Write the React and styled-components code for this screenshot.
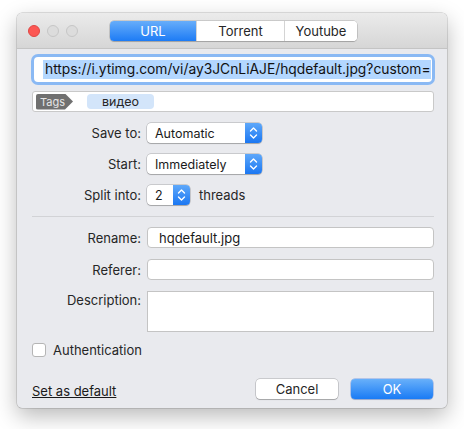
import React from "react";
import styled, { createGlobalStyle } from "styled-components";

const Global = createGlobalStyle`
  html, body { margin: 0; padding: 0; background: #ffffff; }
  body { font-family: Inter, "Liberation Sans", sans-serif; color: #262626; }
  * { box-sizing: border-box; }
`;

const Page = styled.div`
  width: 464px;
  height: 429px;
  padding: 13px 0 0 17px;
`;

const Window = styled.div`
  width: 430px;
  height: 395px;
  background: #e9eaee;
  border-radius: 5px;
  box-shadow: 0 0 0 0.5px rgba(0,0,0,0.22), 0 8px 22px rgba(0,0,0,0.28);
  display: flex;
  flex-direction: column;
  overflow: hidden;
`;

const TitleBar = styled.div`
  height: 36px;
  flex: none;
  background: linear-gradient(#ebebeb, #d6d6d6);
  border-bottom: 1px solid #c4c4c4;
  display: flex;
  align-items: center;
  padding-left: 11px;
`;

const Lights = styled.div`
  display: flex;
  gap: 7px;
`;

const Light = styled.span`
  width: 12px;
  height: 12px;
  border-radius: 50%;
  background: ${p => (p.$red ? "#fc5753" : "#dcdcdc")};
  border: 1px solid ${p => (p.$red ? "#df4744" : "#c6c6c6")};
`;

const Segmented = styled.div`
  display: flex;
  margin-left: 32px;
  height: 20px;
  border-radius: 4px;
  background: #fff;
  box-shadow: 0 0 0 0.5px rgba(0,0,0,0.25), 0 1px 1px rgba(0,0,0,0.15);
  overflow: hidden;
`;

const Segment = styled.div`
  width: ${p => p.$w}px;
  display: flex;
  align-items: center;
  justify-content: center;
  font-size: 13px;
  color: ${p => (p.$active ? "#fff" : "#262626")};
  background: ${p => (p.$active ? "linear-gradient(#67adfa, #1d7bf5)" : "#fff")};
  border-left: ${p => (p.$first || p.$active ? "none" : "1px solid #d4d4d4")};
`;

const Body = styled.div`
  flex: 1;
  padding: 8px 13px 0 15px;
  display: flex;
  flex-direction: column;
`;

const UrlField = styled.div`
  height: 25px;
  border-radius: 4px;
  background: #fff;
  box-shadow: 0 0 0 3px #8ab9f4, 0 0 0 1px #5f9cf0;
  margin: 0 2px 0 2px;
  display: flex;
  align-items: center;
  padding-left: 9px;
  overflow: hidden;
`;

const Selected = styled.span`
  background: #b3d7ff;
  font-size: 13.8px;
  line-height: 19px;
  color: #111;
  white-space: nowrap;
  padding-left: 2px;
`;

const TagsField = styled.div`
  margin-top: 9px;
  height: 21px;
  background: #fff;
  border: 1px solid #c9c9c9;
  border-radius: 3px;
  display: flex;
  align-items: center;
  padding-left: 3px;
  gap: 14px;
`;

const TagLabel = styled.span`
  height: 16px;
  width: 37px;
  background: #707070;
  color: #e6e6e6;
  font-size: 11px;
  display: flex;
  align-items: center;
  padding-left: 4px;
  clip-path: polygon(0 0, 29px 0, 37px 50%, 29px 100%, 0 100%);
  border-radius: 2px 0 0 2px;
`;

const Token = styled.span`
  height: 15px;
  width: 67px;
  background: #d3e5fa;
  border-radius: 4px;
  font-size: 12.5px;
  display: flex;
  align-items: center;
  justify-content: center;
`;

const Grid = styled.div`
  display: grid;
  grid-template-columns: 109px 1fr;
  column-gap: 6px;
  align-items: center;
  margin-top: ${p => p.$mt}px;
  row-gap: ${p => p.$gap}px;
`;

const Label = styled.div`
  text-align: right;
  font-size: 13px;
  color: #262626;
  align-self: ${p => (p.$top ? "start" : "center")};
  padding-top: ${p => (p.$top ? "1px" : "0")};
`;

const Inline = styled.div`
  display: flex;
  align-items: center;
  gap: 9px;
  font-size: 13px;
`;

const Popup = styled.div`
  width: ${p => p.$w}px;
  height: 20px;
  background: #fff;
  border-radius: 4px;
  box-shadow: 0 0 0 0.5px rgba(0,0,0,0.28), 0 1px 1px rgba(0,0,0,0.18);
  display: flex;
  align-items: center;
  overflow: hidden;
`;

const PopupText = styled.span`
  flex: 1;
  font-size: 12.5px;
  padding-left: 8px;
  color: #1a1a1a;
`;

const Stepper = styled.span`
  width: 17px;
  height: 100%;
  background: linear-gradient(#5ea8fa, #1b77f2);
  display: flex;
  align-items: center;
  justify-content: center;
`;

const Separator = styled.div`
  height: 1px;
  background: #d2d3d6;
  margin-top: 11px;
`;

const Field = styled.div`
  height: ${p => p.$h}px;
  background: #fff;
  border: 1px solid #c4c4c4;
  border-radius: ${p => (p.$square ? 0 : 4)}px;
  font-size: 13px;
  display: flex;
  align-items: ${p => (p.$square ? "flex-start" : "center")};
  padding-left: 11px;
  color: #1a1a1a;
`;

const CheckRow = styled.label`
  display: flex;
  align-items: center;
  gap: 7px;
  margin-top: 10px;
  font-size: 13px;
  color: #262626;
`;

const Box = styled.span`
  width: 14px;
  height: 14px;
  background: #fff;
  border: 1px solid #b5b5b5;
  border-radius: 3px;
`;

const Footer = styled.div`
  margin-top: 21px;
  display: flex;
  align-items: center;
`;

const LinkText = styled.span`
  font-size: 13px;
  text-decoration: underline;
  color: #1a1a1a;
  padding-top: 4px;
`;

const Buttons = styled.div`
  margin-left: auto;
  display: flex;
  gap: 13px;
  margin-right: 1px;
`;

const Button = styled.div`
  width: 82px;
  height: 20px;
  border-radius: 4px;
  display: flex;
  align-items: center;
  justify-content: center;
  font-size: 13px;
  color: ${p => (p.$primary ? "#fff" : "#262626")};
  background: ${p => (p.$primary ? "linear-gradient(#68b0fa, #1a7bf5)" : "#fff")};
  box-shadow: ${p => (p.$primary ? "0 0 0 0.5px rgba(20,90,220,0.5), 0 1px 1px rgba(0,0,0,0.15)" : "0 0 0 0.5px rgba(0,0,0,0.28), 0 1px 1px rgba(0,0,0,0.18)")};
`;

const Chevrons = () => (
  <svg width="9" height="14" viewBox="0 0 9 14">
    <path d="M1.5 5 L4.5 2 L7.5 5" fill="none" stroke="#fff" strokeWidth="1.4" strokeLinecap="round" strokeLinejoin="round" />
    <path d="M1.5 9 L4.5 12 L7.5 9" fill="none" stroke="#fff" strokeWidth="1.4" strokeLinecap="round" strokeLinejoin="round" />
  </svg>
);

const Select = ({ w, value }) => (
  <Popup $w={w}>
    <PopupText>{value}</PopupText>
    <Stepper><Chevrons /></Stepper>
  </Popup>
);

export default function App() {
  return (
    <>
      <Global />
      <Page>
        <Window>
          <TitleBar>
            <Lights>
              <Light $red />
              <Light />
              <Light />
            </Lights>
            <Segmented>
              <Segment $w={86} $active $first>URL</Segment>
              <Segment $w={88}>Torrent</Segment>
              <Segment $w={73}>Youtube</Segment>
            </Segmented>
          </TitleBar>
          <Body>
            <UrlField>
              <Selected>https://i.ytimg.com/vi/ay3JCnLiAJE/hqdefault.jpg?custom=</Selected>
            </UrlField>
            <TagsField>
              <TagLabel>Tags</TagLabel>
              <Token>видео</Token>
            </TagsField>
            <Grid $mt={11} $gap={11}>
              <Label>Save to:</Label>
              <Select w={115} value="Automatic" />
              <Label>Start:</Label>
              <Select w={115} value="Immediately" />
              <Label>Split into:</Label>
              <Inline>
                <Select w={43} value="2" />
                <span>threads</span>
              </Inline>
            </Grid>
            <Separator />
            <Grid $mt={10} $gap={11}>
              <Label>Rename:</Label>
              <Field $h={21}>hqdefault.jpg</Field>
              <Label>Referer:</Label>
              <Field $h={21} />
              <Label $top>Description:</Label>
              <Field $h={41} $square />
            </Grid>
            <CheckRow>
              <Box />
              Authentication
            </CheckRow>
            <Footer>
              <LinkText>Set as default</LinkText>
              <Buttons>
                <Button>Cancel</Button>
                <Button $primary>OK</Button>
              </Buttons>
            </Footer>
          </Body>
        </Window>
      </Page>
    </>
  );
}
